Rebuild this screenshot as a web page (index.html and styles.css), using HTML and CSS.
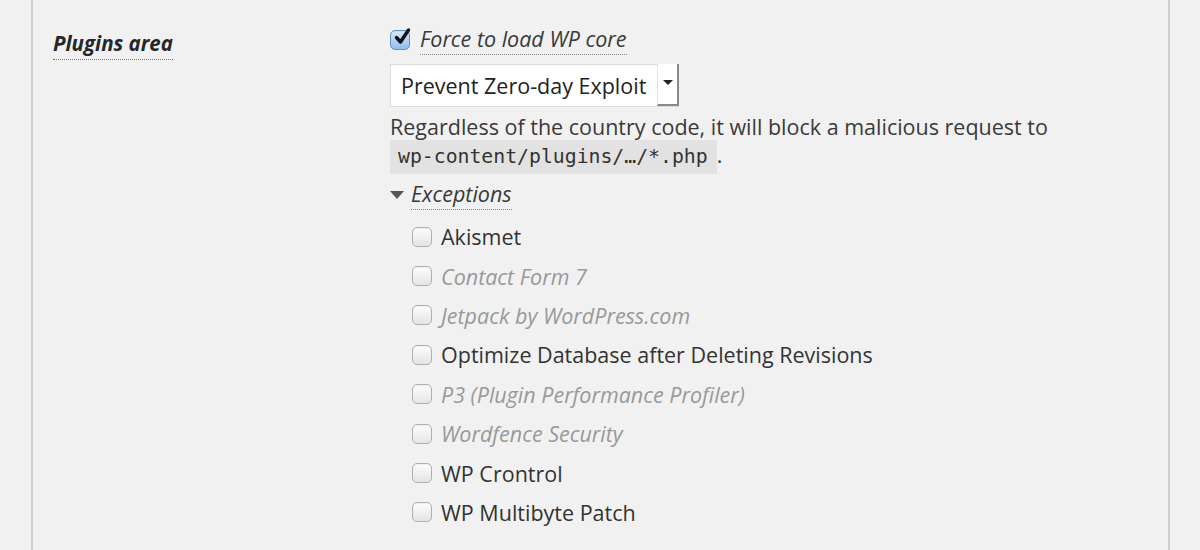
FILE: index.html
```html
<!DOCTYPE html>
<html>
<head>
<meta charset="utf-8">
<link rel="stylesheet" href="styles.css">
</head>
<body>
<div class="panel">
  <div class="row">
    <div class="label-col"><span class="label">Plugins area</span></div>
    <div class="field-col">
      <label class="force">
        <span class="cb cb-checked"><svg viewBox="0 0 20 20" width="20" height="20"><path d="M4.5 10.5 L8.5 15 L16.5 3" fill="none" stroke="#111" stroke-width="3.4" stroke-linecap="round" stroke-linejoin="round"/></svg></span>
        <span class="dotted">Force to load WP core</span>
      </label>
      <div class="select">
        <span class="select-text">Prevent Zero-day Exploit</span>
        <span class="select-btn"><span class="caret"></span></span>
      </div>
      <p class="desc">Regardless of the country code, it will block a malicious request to <code>wp-content/plugins/…/*.php</code>.</p>
      <div class="exceptions">
        <span class="tri"></span><span class="dotted">Exceptions</span>
      </div>
      <ul class="plugins">
        <li><span class="cb"></span><span>Akismet</span></li>
        <li class="off"><span class="cb"></span><span>Contact Form 7</span></li>
        <li class="off"><span class="cb"></span><span>Jetpack by WordPress.com</span></li>
        <li><span class="cb"></span><span>Optimize Database after Deleting Revisions</span></li>
        <li class="off"><span class="cb"></span><span>P3 (Plugin Performance Profiler)</span></li>
        <li class="off"><span class="cb"></span><span>Wordfence Security</span></li>
        <li><span class="cb"></span><span>WP Crontrol</span></li>
        <li><span class="cb"></span><span>WP Multibyte Patch</span></li>
      </ul>
    </div>
  </div>
</div>
</body>
</html>
```
FILE: styles.css
```css
html, body {
  margin: 0;
  padding: 0;
  background: #f1f1f1;
  height: 550px;
  overflow: hidden;
}
body {
  font-family: "Open Sans", "Liberation Sans", sans-serif;
  color: #3a3a3a;
}
.panel {
  margin-left: 31px;
  width: 1135px;
  height: 550px;
  border-left: 2px solid #cfcfcf;
  border-right: 2px solid #cfcfcf;
  box-sizing: content-box;
}
.row {
  display: flex;
  padding-top: 27px;
}
.label-col {
  width: 337px;
  padding-left: 20px;
  padding-top: 2px;
}
.label {
  font-weight: bold;
  font-style: italic;
  font-size: 20.5px;
  color: #23282d;
  border-bottom: 1px dotted #777;
  padding-bottom: 2px;
}
.field-col {
  display: flex;
  flex-direction: column;
  align-items: flex-start;
}
.force {
  display: flex;
  align-items: center;
  gap: 10px;
  font-size: 21.5px;
  font-style: italic;
  color: #3a3a3a;
  height: 26px;
}
.dotted {
  border-bottom: 1px dotted #888;
  line-height: 26px;
  padding-bottom: 2px;
}
.cb {
  width: 18px;
  height: 18px;
  border: 1px solid #b0b0b0;
  border-radius: 5px;
  background: linear-gradient(#fdfdfd, #e4e4e4);
  box-shadow: inset 0 1px 1px rgba(0,0,0,0.06);
  flex: none;
  display: inline-flex;
  align-items: center;
  justify-content: center;
}
.cb-checked {
  border-color: #6b8eb8;
  background: linear-gradient(#d7e9fb, #8fbdf0);
  position: relative;
}
.cb-checked svg {
  position: absolute;
  left: 1px;
  top: -4px;
}
.select {
  margin-top: 11px;
  width: 287px;
  height: 41px;
  background: #fff;
  border: 1px solid #dcdcdc;
  display: flex;
  align-items: center;
  justify-content: space-between;
}
.select-text {
  font-size: 21.5px;
  color: #222;
  padding-left: 10px;
}
.select-btn {
  width: 22px;
  margin-right: -1px;
  border-left: 1px solid #e2e2e2;
  border-right: 2px solid #8a8a8a;
  border-bottom: 2px solid #8a8a8a;
  box-sizing: border-box;
  align-self: flex-start;
  margin-top: -1px;
  height: 42px;
  display: flex;
  align-items: center;
  justify-content: center;
  background: #fff;
}
.caret {
  width: 0;
  height: 0;
  border-left: 5px solid transparent;
  border-right: 5px solid transparent;
  border-top: 5px solid #222;
  margin-top: -4px;
}
.desc {
  margin: 6px 0 0 0;
  font-size: 21.5px;
  line-height: 28px;
  color: #3a3a3a;
  width: 690px;
}
code {
  font-family: "DejaVu Sans Mono", "Liberation Mono", monospace;
  font-size: 19.8px;
  background: #e2e2e2;
  padding: 5px 9px 6px 8px;
  white-space: nowrap;
  color: #333;
}
.exceptions {
  margin-top: 10px;
  display: flex;
  align-items: center;
  font-size: 21.5px;
  font-style: italic;
  color: #3a3a3a;
}
.tri {
  width: 0;
  height: 0;
  border-left: 7px solid transparent;
  border-right: 7px solid transparent;
  border-top: 8px solid #555;
  margin-right: 7px;
  margin-top: -2px;
}
.plugins {
  list-style: none;
  margin: 7px 0 0 0;
  padding: 0 0 0 22px;
}
.plugins li {
  display: flex;
  align-items: center;
  gap: 9px;
  height: 39.4px;
  font-size: 21.5px;
  color: #333;
}
.plugins li.off {
  font-style: italic;
  color: #999;
}
```
